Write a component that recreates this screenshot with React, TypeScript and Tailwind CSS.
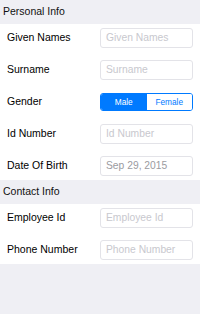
import React from 'react';

const font = { fontFamily: '"Liberation Sans", Arial, sans-serif' };

const SectionHeader = ({ title }: { title: string }) => (
  <div className="h-6 flex items-center pl-[3px] bg-[#efeff4] text-[10.5px] text-[#111]">{title}</div>
);

const Row = ({ label, children }: { label: string; children: React.ReactNode }) => (
  <div className="flex items-center justify-between py-1 pl-[7px] pr-[7px]">
    <span className="text-[10.5px] text-black">{label}</span>
    {children}
  </div>
);

const Field = ({ placeholder, value }: { placeholder: string; value?: string }) => (
  <div className="w-[93px] h-5 border border-[#e3e3e8] rounded-[3px] flex items-center px-[5px] bg-white">
    {value ? (
      <span className="text-[10.3px] text-[#9b9b9f]">{value}</span>
    ) : (
      <span className="text-[10.3px] text-[#c8c8ce]">{placeholder}</span>
    )}
  </div>
);

const GenderToggle = () => (
  <div className="w-[93px] h-5 flex items-center">
    <div className="w-full h-[18px] flex border border-[#007aff] rounded-[3px] overflow-hidden text-[8.3px]">
      <div className="flex-1 bg-[#007aff] text-white flex items-center justify-center">Male</div>
      <div className="flex-1 bg-white text-[#007aff] flex items-center justify-center">Female</div>
    </div>
  </div>
);

export default function App() {
  return (
    <div className="w-[200px] min-h-[314px] bg-[#efeff4]" style={font}>
      <SectionHeader title="Personal Info" />
      <div className="bg-white flex flex-col gap-1">
        <Row label="Given Names"><Field placeholder="Given Names" /></Row>
        <Row label="Surname"><Field placeholder="Surname" /></Row>
        <Row label="Gender"><GenderToggle /></Row>
        <Row label="Id Number"><Field placeholder="Id Number" /></Row>
        <Row label="Date Of Birth"><Field placeholder="Date Of Birth" value="Sep 29, 2015" /></Row>
      </div>
      <SectionHeader title="Contact Info" />
      <div className="bg-white flex flex-col gap-1">
        <Row label="Employee Id"><Field placeholder="Employee Id" /></Row>
        <Row label="Phone Number"><Field placeholder="Phone Number" /></Row>
      </div>
    </div>
  );
}
